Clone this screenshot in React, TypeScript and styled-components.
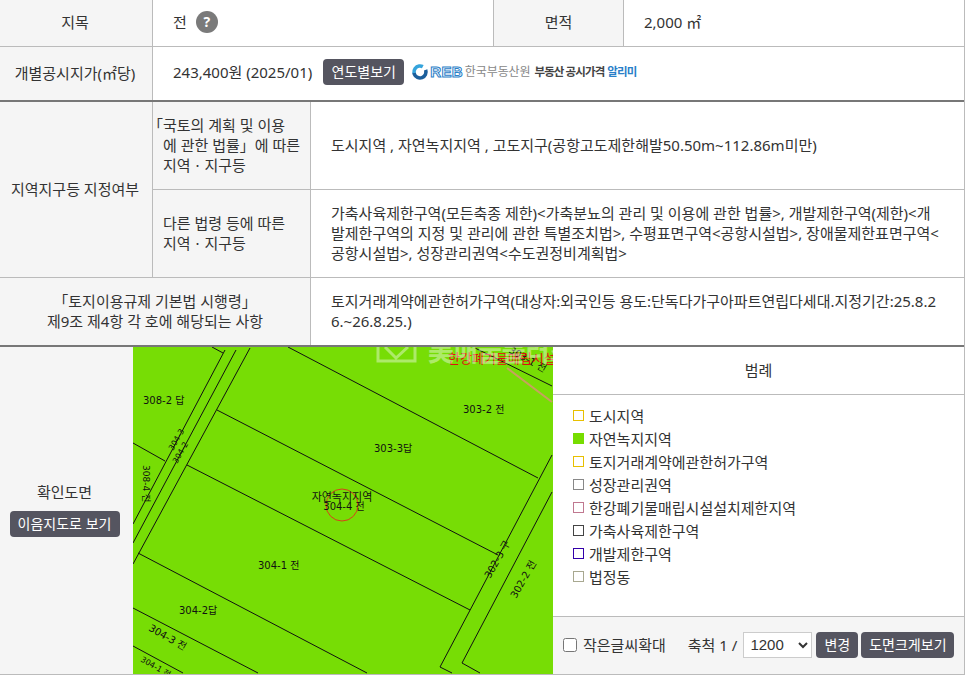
import styled, { createGlobalStyle } from 'styled-components';

const GlobalStyle = createGlobalStyle`
  html, body {
    margin: 0;
    padding: 0;
    background: #fff;
    font-family: "Noto Sans", "Noto Sans CJK KR", sans-serif;
    font-size: 15px;
    color: #333;
  }
`;

const Sheet = styled.div`
  width: 965px;
  box-sizing: border-box;
  border-right: 1px solid #bbb;
  border-bottom: 1px solid #bbb;
`;

const Row = styled.div<{ $height: number; $heavy?: boolean }>`
  display: flex;
  box-sizing: border-box;
  height: ${(p) => p.$height}px;
  border-bottom: ${(p) => (p.$heavy ? '2px solid #777' : '1px solid #bbb')};
`;

const Label = styled.div<{ $width: number; $inset?: boolean }>`
  flex: 0 0 ${(p) => p.$width}px;
  box-sizing: border-box;
  display: flex;
  align-items: center;
  justify-content: center;
  text-align: center;
  line-height: 20px;
  padding: 0 ${(p) => (p.$inset ? 2 : 0)}px 2px 0;
  background: #f5f5f5;
  border-right: 1px solid #bbb;
`;

const Value = styled.div<{ $width?: number; $lift?: number }>`
  flex: ${(p) => (p.$width ? `0 0 ${p.$width}px` : '1 1 0')};
  min-width: 0;
  box-sizing: border-box;
  display: flex;
  align-items: center;
  padding: 0 20px ${(p) => p.$lift ?? 2}px;
  line-height: 20px;
  word-break: break-all;
  border-right: ${(p) => (p.$width ? '1px solid #bbb' : 'none')};
`;

const HelpIcon = styled.span`
  width: 22px;
  height: 22px;
  margin-left: 9px;
  border-radius: 50%;
  background: #7a7a7a;
  color: #fff;
  font-weight: 700;
  font-size: 14px;
  display: flex;
  align-items: center;
  justify-content: center;
`;

const DarkButton = styled.button<{ $width: number; $left?: number; $right?: number }>`
  width: ${(p) => p.$width}px;
  height: 26px;
  margin: 0 ${(p) => p.$right ?? 0}px 0 ${(p) => p.$left ?? 0}px;
  padding: 0;
  border: none;
  border-radius: 4px;
  background: #555560;
  color: #fff;
  font: inherit;
  font-size: 14px;
  line-height: 26px;
  white-space: nowrap;
  flex: none;
`;

const LogoLink = styled.div`
  display: flex;
  align-items: center;
  margin-left: 7px;
  white-space: nowrap;
`;

const LogoLetters = styled.span`
  margin-left: 1px;
  font-family: "Liberation Sans", sans-serif;
  font-size: 15px;
  font-weight: 700;
  letter-spacing: 0.3px;
  color: #fff;
  -webkit-text-stroke: 1px #2a80c8;
`;

const LogoOrg = styled.span`
  margin-left: 2px;
  font-size: 12px;
  letter-spacing: -0.1px;
  color: #888;
`;

const LogoTitle = styled.span<{ $blue?: boolean }>`
  margin-left: ${(p) => (p.$blue ? 3 : 4)}px;
  font-size: 11.5px;
  font-weight: 700;
  letter-spacing: -0.9px;
  color: ${(p) => (p.$blue ? '#2a80c8' : '#444')};
`;

const ZoneGroup = styled.div`
  display: flex;
  height: 176px;
  box-sizing: border-box;
  border-bottom: 1px solid #bbb;
`;

const ZoneRows = styled.div`
  flex: 1 1 0;
  min-width: 0;
  display: flex;
  flex-direction: column;
`;

const ZoneRow = styled.div<{ $last?: boolean }>`
  flex: 1 1 0;
  display: flex;
  min-height: 0;
  border-bottom: ${(p) => (p.$last ? 'none' : '1px solid #bbb')};
`;

const SubLabel = styled.div`
  flex: 0 0 158px;
  box-sizing: border-box;
  display: flex;
  align-items: center;
  padding: 0 4px 2px 10px;
  line-height: 20px;
  background: #f5f5f5;
  border-right: 1px solid #bbb;
`;

const Hanging = styled.div`
  text-indent: -15px;
`;

const DrawingRow = styled.div`
  display: flex;
  height: 327px;
`;

const DrawingLabel = styled.div`
  flex: 0 0 133px;
  display: flex;
  flex-direction: column;
  align-items: center;
  justify-content: center;
  gap: 9px;
  padding: 0 4px 4px 0;
  box-sizing: border-box;
  background: #f5f5f5;
`;

const MapSvg = styled.svg`
  flex: 0 0 420px;
  display: block;
  width: 420px;
  height: 327px;
`;

const Legend = styled.div`
  flex: 1 1 0;
  min-width: 0;
  display: flex;
  flex-direction: column;
`;

const LegendHead = styled.div`
  flex: 0 0 48px;
  box-sizing: border-box;
  display: flex;
  align-items: center;
  justify-content: center;
  padding-bottom: 2px;
  border-bottom: 1px solid #bbb;
`;

const LegendList = styled.ul`
  flex: 1 1 0;
  margin: 0;
  padding: 9px 0 0 20px;
  list-style: none;
`;

const LegendItem = styled.li`
  display: flex;
  align-items: center;
  height: 23px;
  gap: 5px;
`;

const Swatch = styled.span<{ $color: string; $filled?: boolean }>`
  width: 11px;
  height: 11px;
  margin-top: -1px;
  box-sizing: border-box;
  border: 1px solid ${(p) => p.$color};
  background: ${(p) => (p.$filled ? p.$color : '#fff')};
`;

const LegendFoot = styled.div`
  flex: 0 0 58px;
  box-sizing: border-box;
  display: flex;
  align-items: center;
  padding: 0 10px 2px;
  white-space: nowrap;
  background: #f5f5f5;
  border-top: 1px solid #bbb;
`;

const BigCheck = styled.input`
  width: 14px;
  height: 14px;
  margin: 0 6px 0 0;
  flex: none;
`;

const ScaleText = styled.span`
  margin-left: 22px;
  margin-right: 6px;
`;

const ScaleSelect = styled.select`
  flex: none;
  width: 69px;
  height: 26px;
  margin-right: 4px;
  padding: 0 0 0 2px;
  border: 1px solid #ccc;
  background: #fff;
  color: #333;
  font: inherit;
  font-family: "Liberation Sans", sans-serif;
`;

const MapText = styled.text`
  font-family: "DejaVu Sans", "Noto Sans CJK KR", sans-serif;
  fill: #111;
`;

const NoticeText = styled.text`
  font-family: "Noto Sans CJK KR", sans-serif;
  font-size: 13px;
  fill: #e01010;
`;

const Watermark = styled.text`
  font-family: "Noto Sans CJK KR", sans-serif;
  font-size: 26px;
  font-weight: 700;
  fill: #fff;
  opacity: 0.4;
`;

const legend = [
  { name: '도시지역', color: '#e8c000' },
  { name: '자연녹지지역', color: '#77dd00', filled: true },
  { name: '토지거래계약에관한허가구역', color: '#e8c000' },
  { name: '성장관리권역', color: '#888888' },
  { name: '한강폐기물매립시설설치제한지역', color: '#c07890' },
  { name: '가축사육제한구역', color: '#444444' },
  { name: '개발제한구역', color: '#3300aa' },
  { name: '법정동', color: '#a8a890' },
];

const parcelLines = [
  '288,347 538,478',
  '217,410 498,555',
  '187,465 470,610',
  '138,553 367,673',
  '133,608 258,673',
  '133,646 183,673',
  '133,443 165,461',
  '225,350 133,524',
  '236,350 133,543',
  '250,348 133,564',
  '212,347 223,353',
  '552,455 440,667 452,673',
  '552,492 462,663 480,673',
  '475,348 552,386',
];

const mapLabels = [
  { text: '308-2 답', x: 143, y: 404 },
  { text: '303-2 전', x: 463, y: 413 },
  { text: '303-3답', x: 374, y: 452 },
  { text: '304-1 전', x: 258, y: 569 },
  { text: '304-2답', x: 179, y: 614 },
];

const slantLabels = [
  { text: '304-3 전', x: 148, y: 630, r: 30, size: 10 },
  { text: '304-1 전', x: 140, y: 661, r: 30, size: 8 },
  { text: '302-3 구', x: 490, y: 579, r: -60, size: 10 },
  { text: '302-2 전', x: 516, y: 599, r: -60, size: 10 },
  { text: '308-4 전', x: 143, y: 465, r: 90, size: 9 },
  { text: '304-3', x: 173, y: 451, r: -60, size: 8 },
  { text: '304-2', x: 177, y: 464, r: -60, size: 8 },
  { text: '303-1 전', x: 508, y: 352, r: 30, size: 10 },
];

const App = () => {
  return (
    <>
      <GlobalStyle />
      <Sheet>
        <Row $height={47}>
          <Label $width={153} $inset>
            지목
          </Label>
          <Value $width={341}>
            전<HelpIcon>?</HelpIcon>
          </Value>
          <Label $width={130}>면적</Label>
          <Value>2,000 ㎡</Value>
        </Row>
        <Row $height={55} $heavy>
          <Label $width={153} $inset>
            개별공시지가(㎡당)
          </Label>
          <Value $lift={3}>
            <span>243,400원 (2025/01)</span>
            <DarkButton $width={81} $left={11}>
              연도별보기
            </DarkButton>
            <LogoLink>
              <svg width="18" height="18" viewBox="0 0 18 18" aria-hidden="true">
                <circle cx="9" cy="9" r="6" fill="none" stroke="#1c5f9c" strokeWidth="3.6" strokeDasharray="20 18" transform="rotate(-20 9 9)" />
                <circle cx="9" cy="9" r="6" fill="none" stroke="#35a4dc" strokeWidth="3.6" strokeDasharray="13 25" transform="rotate(171 9 9)" />
              </svg>
              <LogoLetters>REB</LogoLetters>
              <LogoOrg>한국부동산원</LogoOrg>
              <LogoTitle>부동산 공시가격</LogoTitle>
              <LogoTitle $blue>알리미</LogoTitle>
            </LogoLink>
          </Value>
        </Row>
        <ZoneGroup>
          <Label $width={153} $inset>
            지역지구등 지정여부
          </Label>
          <ZoneRows>
            <ZoneRow>
              <SubLabel>
                <Hanging>
                  「국토의 계획 및 이용
                  <br />
                  에 관한 법률」에 따른
                  <br />
                  지역ㆍ지구등
                </Hanging>
              </SubLabel>
              <Value>도시지역 , 자연녹지지역 , 고도지구(공항고도제한해발50.50m~112.86m미만)</Value>
            </ZoneRow>
            <ZoneRow $last>
              <SubLabel>
                <div>
                  다른 법령 등에 따른
                  <br />
                  지역ㆍ지구등
                </div>
              </SubLabel>
              <Value>
                가축사육제한구역(모든축종 제한)&lt;가축분뇨의 관리 및 이용에 관한 법률&gt;, 개발제한구역(제한)&lt;개발제한구역의 지정 및 관리에 관한 특별조치법&gt;, 수평표면구역&lt;공항시설법&gt;, 장애물제한표면구역&lt;공항시설법&gt;, 성장관리권역&lt;수도권정비계획법&gt;
              </Value>
            </ZoneRow>
          </ZoneRows>
        </ZoneGroup>
        <Row $height={69} $heavy>
          <Label $width={311}>
            <div>
              「토지이용규제 기본법 시행령」
              <br />
              제9조 제4항 각 호에 해당되는 사항
            </div>
          </Label>
          <Value>토지거래계약에관한허가구역(대상자:외국인등 용도:단독다가구아파트연립다세대.지정기간:25.8.26.~26.8.25.)</Value>
        </Row>
        <DrawingRow>
          <DrawingLabel>
            확인도면
            <DarkButton $width={110}>이음지도로 보기</DarkButton>
          </DrawingLabel>
          <MapSvg viewBox="133 347 420 327" aria-label="확인도면">
            <rect x="133" y="347" width="420" height="327" fill="#77dd05" />
            <polyline points="507,368 552,402" fill="none" stroke="#c8a060" strokeWidth="2" />
            {parcelLines.map((points) => (
              <polyline key={points} points={points} fill="none" stroke="#111" strokeWidth="1" />
            ))}
            {mapLabels.map((label) => (
              <MapText key={label.text + label.x} x={label.x} y={label.y} fontSize="10">
                {label.text}
              </MapText>
            ))}
            {slantLabels.map((label) => (
              <MapText
                key={label.text + label.x}
                fontSize={label.size}
                transform={`translate(${label.x} ${label.y}) rotate(${label.r})`}
              >
                {label.text}
              </MapText>
            ))}
            <circle cx="342" cy="505" r="16" fill="none" stroke="#d8401a" strokeWidth="1" />
            <MapText x="342" y="501" fontSize="11" textAnchor="middle">
              자연녹지지역
            </MapText>
            <MapText x="344" y="510" fontSize="10" textAnchor="middle">
              304-4 전
            </MapText>
            <NoticeText x="448" y="363">
              한강폐기물매립시설
            </NoticeText>
            <g opacity="0.4" fill="none" stroke="#fff" strokeWidth="3">
              <path d="M378 347 V361 H415 V347 M385 347 L396 358 L408 347" />
            </g>
            <Watermark x="428" y="361">
              美매물플러스
            </Watermark>
          </MapSvg>
          <Legend>
            <LegendHead>범례</LegendHead>
            <LegendList>
              {legend.map((item) => (
                <LegendItem key={item.name}>
                  <Swatch $color={item.color} $filled={item.filled} />
                  {item.name}
                </LegendItem>
              ))}
            </LegendList>
            <LegendFoot>
              <BigCheck type="checkbox" />
              작은글씨확대
              <ScaleText>축척 1 /</ScaleText>
              <ScaleSelect defaultValue="1200">
                <option value="1200">1200</option>
              </ScaleSelect>
              <DarkButton $width={42} $right={3}>
                변경
              </DarkButton>
              <DarkButton $width={93}>도면크게보기</DarkButton>
            </LegendFoot>
          </Legend>
        </DrawingRow>
      </Sheet>
    </>
  );
};

export default App;
